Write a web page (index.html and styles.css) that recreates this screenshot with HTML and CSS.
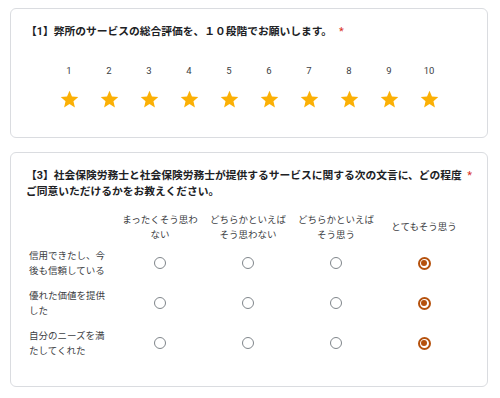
FILE: index.html
```html
<!DOCTYPE html>
<html lang="ja">
<head>
    <meta charset="UTF-8">
    <meta name="viewport" content="width=device-width, initial-scale=1.0">
    <title>アンケート</title>
    <link rel="stylesheet" href="styles.css">
</head>
<body>
    <div class="card">
        <div class="question">
            <div class="question-text">【1】弊所のサービスの総合評価を、１０段階でお願いします。</div>
            <span class="required">*</span>
        </div>
        <div class="rating">
            <div class="rating-item"><span class="num">1</span><svg class="star" viewBox="0 0 24 24"><path d="M12 17.27L18.18 21l-1.64-7.03L22 9.24l-7.19-.61L12 2 9.19 8.63 2 9.24l5.46 4.73L5.82 21z"/></svg></div>
            <div class="rating-item"><span class="num">2</span><svg class="star" viewBox="0 0 24 24"><path d="M12 17.27L18.18 21l-1.64-7.03L22 9.24l-7.19-.61L12 2 9.19 8.63 2 9.24l5.46 4.73L5.82 21z"/></svg></div>
            <div class="rating-item"><span class="num">3</span><svg class="star" viewBox="0 0 24 24"><path d="M12 17.27L18.18 21l-1.64-7.03L22 9.24l-7.19-.61L12 2 9.19 8.63 2 9.24l5.46 4.73L5.82 21z"/></svg></div>
            <div class="rating-item"><span class="num">4</span><svg class="star" viewBox="0 0 24 24"><path d="M12 17.27L18.18 21l-1.64-7.03L22 9.24l-7.19-.61L12 2 9.19 8.63 2 9.24l5.46 4.73L5.82 21z"/></svg></div>
            <div class="rating-item"><span class="num">5</span><svg class="star" viewBox="0 0 24 24"><path d="M12 17.27L18.18 21l-1.64-7.03L22 9.24l-7.19-.61L12 2 9.19 8.63 2 9.24l5.46 4.73L5.82 21z"/></svg></div>
            <div class="rating-item"><span class="num">6</span><svg class="star" viewBox="0 0 24 24"><path d="M12 17.27L18.18 21l-1.64-7.03L22 9.24l-7.19-.61L12 2 9.19 8.63 2 9.24l5.46 4.73L5.82 21z"/></svg></div>
            <div class="rating-item"><span class="num">7</span><svg class="star" viewBox="0 0 24 24"><path d="M12 17.27L18.18 21l-1.64-7.03L22 9.24l-7.19-.61L12 2 9.19 8.63 2 9.24l5.46 4.73L5.82 21z"/></svg></div>
            <div class="rating-item"><span class="num">8</span><svg class="star" viewBox="0 0 24 24"><path d="M12 17.27L18.18 21l-1.64-7.03L22 9.24l-7.19-.61L12 2 9.19 8.63 2 9.24l5.46 4.73L5.82 21z"/></svg></div>
            <div class="rating-item"><span class="num">9</span><svg class="star" viewBox="0 0 24 24"><path d="M12 17.27L18.18 21l-1.64-7.03L22 9.24l-7.19-.61L12 2 9.19 8.63 2 9.24l5.46 4.73L5.82 21z"/></svg></div>
            <div class="rating-item"><span class="num">10</span><svg class="star" viewBox="0 0 24 24"><path d="M12 17.27L18.18 21l-1.64-7.03L22 9.24l-7.19-.61L12 2 9.19 8.63 2 9.24l5.46 4.73L5.82 21z"/></svg></div>
        </div>
    </div>

    <div class="card">
        <div class="question">
            <div class="question-text">【3】社会保険労務士と社会保険労務士が提供するサービスに関する次の文言に、どの程度ご同意いただけるかをお教えください。</div>
            <span class="required">*</span>
        </div>
        <div class="grid">
            <div class="head"></div>
            <div class="head">まったくそう思わない</div>
            <div class="head">どちらかといえばそう思わない</div>
            <div class="head">どちらかといえばそう思う</div>
            <div class="head">とてもそう思う</div>

            <div class="row-label">信用できたし、今後も信頼している</div>
            <div class="cell"><span class="radio"></span></div>
            <div class="cell"><span class="radio"></span></div>
            <div class="cell"><span class="radio"></span></div>
            <div class="cell"><span class="radio checked"></span></div>

            <div class="row-label">優れた価値を提供した</div>
            <div class="cell"><span class="radio"></span></div>
            <div class="cell"><span class="radio"></span></div>
            <div class="cell"><span class="radio"></span></div>
            <div class="cell"><span class="radio checked"></span></div>

            <div class="row-label">自分のニーズを満たしてくれた</div>
            <div class="cell"><span class="radio"></span></div>
            <div class="cell"><span class="radio"></span></div>
            <div class="cell"><span class="radio"></span></div>
            <div class="cell"><span class="radio checked"></span></div>
        </div>
    </div>
</body>
</html>
```

FILE: styles.css
```css
body {
    margin: 0;
    padding: 8px 12px 0 10px;
    background: #fff;
    font-family: Roboto, "Noto Sans CJK JP", sans-serif;
    color: #202124;
}

.card {
    border: 1px solid #dadce0;
    border-radius: 6px;
    background: #fff;
    margin-bottom: 14px;
}

.card:first-child {
    padding: 15px 20px 27px 15px;
}

.card:last-child {
    padding: 15px 15px 23px 15px;
}

.question {
    display: flex;
    align-items: flex-start;
}

.question-text {
    font-size: 10.75px;
    font-weight: bold;
    line-height: 16px;
}

.required {
    color: #d93025;
    font-size: 11px;
    line-height: 16px;
    margin-left: 7px;
    flex-shrink: 0;
}

.card:last-child .required {
    margin-left: 2px;
}

/* star rating */
.rating {
    display: flex;
    margin-top: 24px;
    margin-left: 23px;
}

.rating-item {
    width: 40px;
    display: flex;
    flex-direction: column;
    align-items: center;
}

.num {
    font-size: 9.5px;
    line-height: 14px;
    color: #3c4043;
}

.star {
    width: 21px;
    height: 21px;
    margin-top: 11px;
    fill: #fbb005;
}

/* grid question */
.grid {
    display: grid;
    grid-template-columns: 90px repeat(4, 88px);
    grid-template-rows: 33px repeat(3, 40px);
    margin-top: 10px;
    font-size: 9.5px;
    line-height: 15px;
    color: #3c4043;
}

.head {
    text-align: center;
    padding: 0 4px;
    display: flex;
    align-items: center;
    justify-content: center;
}

.row-label {
    display: flex;
    align-items: center;
    padding-left: 3px;
    padding-right: 8px;
}

.cell {
    display: flex;
    align-items: center;
    justify-content: center;
}

.radio {
    width: 10px;
    height: 10px;
    border: 1.5px solid #80868b;
    border-radius: 50%;
    position: relative;
}

.radio.checked {
    border: 2px solid #b5510d;
    width: 9px;
    height: 9px;
}

.radio.checked::after {
    content: "";
    position: absolute;
    left: 1.5px;
    top: 1.5px;
    width: 6px;
    height: 6px;
    border-radius: 50%;
    background: #b5510d;
}
```
